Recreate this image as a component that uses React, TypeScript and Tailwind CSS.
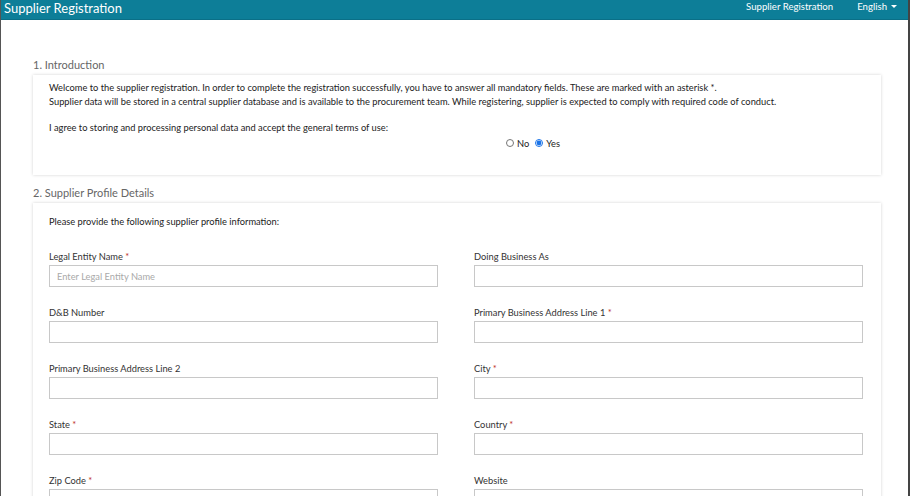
import React from "react";

const font = { fontFamily: 'Lato, "Open Sans", sans-serif' };

function Field({ label, required, placeholder }: { label: string; required?: boolean; placeholder?: string }) {
  return (
    <div className="flex flex-col">
      <label className="h-[16px] text-[9.3px] leading-[16px] text-[#333]">
        {label}
        {required ? <span className="text-[#c0392b]"> *</span> : null}
      </label>
      <input
        className="h-[22px] w-full border border-[#c8c8c8] bg-white px-[7px] text-[9.3px] text-[#333] outline-none placeholder:text-[#a9a9a9]"
        placeholder={placeholder}
        type="text"
      />
    </div>
  );
}

export default function App() {
  const rows: [string, boolean, string | undefined][][] = [
    [["Legal Entity Name", true, "Enter Legal Entity Name"], ["Doing Business As", false, undefined]],
    [["D&B Number", false, undefined], ["Primary Business Address Line 1", true, undefined]],
    [["Primary Business Address Line 2", false, undefined], ["City", true, undefined]],
    [["State", true, undefined], ["Country", true, undefined]],
    [["Zip Code", true, undefined], ["Website", false, undefined]],
  ];

  return (
    <div className="h-[496px] w-[910px] overflow-hidden border-l border-r-2 border-l-[#555] border-r-[#444] bg-white" style={font}>
      <header className="flex h-[20px] items-start justify-between border-b border-[#0a6f87] bg-[#0d7e98] pl-[3px] pr-[11px] text-white">
        <span className="mt-[1px] text-[13px] leading-[14px]">Supplier Registration</span>
        <nav className="flex items-center gap-[24px] text-[9.6px] leading-[13px]">
          <span>Supplier Registration</span>
          <span className="flex items-center gap-[4px]">
            English
            <span className="inline-block border-x-[3px] border-t-[3px] border-x-transparent border-t-white" />
          </span>
        </nav>
      </header>

      <main className="pl-[32px] pr-[27px] pt-[37px]">
        <h2 className="text-[11px] leading-[16px] text-[#666]">1. Introduction</h2>
        <section className="mt-[2px] h-[100px] bg-white px-[16px] pt-[6px] text-[9.3px] leading-[13.5px] text-[#222] shadow-[0_0_3px_rgba(0,0,0,0.18)]">
          <p>Welcome to the supplier registration. In order to complete the registration successfully, you have to answer all mandatory fields. These are marked with an asterisk *.</p>
          <p>Supplier data will be stored in a central supplier database and is available to the procurement team. While registering, supplier is expected to comply with required code of conduct.</p>
          <p className="mt-[13px]">I agree to storing and processing personal data and accept the general terms of use:</p>
          <div className="mt-[2px] flex items-center justify-center gap-[6px] pl-[152px]">
            <label className="flex items-center gap-[3px]">
              <input type="radio" name="agree" className="h-[8px] w-[8px]" />
              No
            </label>
            <label className="flex items-center gap-[3px]">
              <input type="radio" name="agree" defaultChecked className="h-[8px] w-[8px] accent-[#1a73e8]" />
              Yes
            </label>
          </div>
        </section>

        <h2 className="mt-[10px] text-[11px] leading-[16px] text-[#666]">2. Supplier Profile Details</h2>
        <section className="mt-[2px] h-[320px] bg-white px-[16px] pt-[11px] shadow-[0_0_3px_rgba(0,0,0,0.18)]">
          <p className="text-[9.3px] leading-[16px] text-[#222]">Please provide the following supplier profile information:</p>
          <div className="mt-[19px] grid grid-cols-2 gap-x-[36px] gap-y-[18px] pr-[2px]">
            {rows.flat().map(([label, req, ph]) => (
              <Field key={label} label={label} required={req} placeholder={ph} />
            ))}
          </div>
        </section>
      </main>
    </div>
  );
}
